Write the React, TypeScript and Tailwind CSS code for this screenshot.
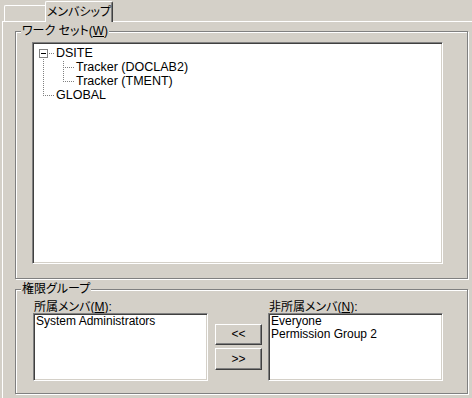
import React from 'react'

const dotsH = (x1: number, x2: number, y: number) => {
  const r = []
  for (let x = x1; x <= x2; x += 2) r.push(<rect key={`h${x}-${y}`} x={x} y={y} width={1} height={1} fill="#808080" />)
  return r
}

const dotsV = (x: number, y1: number, y2: number) => {
  const r = []
  for (let y = y1; y <= y2; y += 2) r.push(<rect key={`v${x}-${y}`} x={x} y={y} width={1} height={1} fill="#808080" />)
  return r
}

function TreeRow({ kind, label }: { kind: 'root' | 'child' | 'lastChild' | 'last'; label: string }) {
  const w = kind === 'child' || kind === 'lastChild' ? 42 : 22
  return (
    <div className="flex h-[14px] items-center">
      <svg width={w} height={14} className="shrink-0" shapeRendering="crispEdges">
        {kind === 'root' && (
          <>
            <rect x={6.5} y={3.5} width={8} height={8} fill="#fff" stroke="#808080" />
            <rect x={8} y={7} width={5} height={1} fill="#000" />
            {dotsH(16, 21, 7)}
            {dotsV(10, 13, 13)}
          </>
        )}
        {kind === 'child' && (
          <>
            {dotsV(10, 1, 13)}
            {dotsV(30, 1, 13)}
            {dotsH(32, 40, 7)}
          </>
        )}
        {kind === 'lastChild' && (
          <>
            {dotsV(10, 1, 13)}
            {dotsV(30, 1, 7)}
            {dotsH(32, 40, 7)}
          </>
        )}
        {kind === 'last' && (
          <>
            {dotsV(10, 1, 7)}
            {dotsH(12, 21, 7)}
          </>
        )}
      </svg>
      <span className="ml-[1px] whitespace-nowrap">{label}</span>
    </div>
  )
}

function GroupBox({ title, className, children }: { title: React.ReactNode; className: string; children: React.ReactNode }) {
  return (
    <div className={`relative border border-[#808080] shadow-[1px_1px_0_#fff,inset_1px_1px_0_#fff] ${className}`}>
      <span className="absolute -top-[8px] left-[5px] bg-[#d4d0c8] px-[1px] leading-[15px] [font-feature-settings:'palt']">{title}</span>
      {children}
    </div>
  )
}

const sunken =
  'border border-t-[#808080] border-l-[#808080] border-r-white border-b-white bg-white shadow-[inset_1px_1px_0_#404040,inset_-1px_-1px_0_#d4d0c8]'

const raised =
  'flex items-center justify-center border border-t-white border-l-white border-r-[#404040] border-b-[#404040] bg-[#d4d0c8] shadow-[inset_-1px_-1px_0_#808080]'

export default function App() {
  return (
    <div className="h-[398px] w-[472px] overflow-hidden bg-[#d4d0c8] font-['Liberation_Sans','Noto_Sans_CJK_JP',sans-serif] text-[12px] leading-[13px] text-black">
      {/* tabs */}
      <div className="flex h-[21px] items-end pl-[4px]">
        <div className="h-[16px] w-[43px] rounded-tl-[2px] border-l border-t border-white" />
        <div className="relative z-10 -mb-[1px] -ml-[2px] flex h-[21px] w-[68px] items-center justify-center rounded-t-[2px] border-l border-r border-t border-l-white border-r-[#404040] border-t-white bg-[#d4d0c8] pt-[1px] shadow-[inset_-1px_0_0_#808080] [font-feature-settings:'palt']">
          メンバシップ
        </div>
      </div>

      {/* tab page */}
      <div className="ml-[2px] h-[400px] border-l border-t border-white pl-[12px] pt-[9px]">
        <GroupBox
          title={
            <>
              ワーク セット(<span className="underline">W</span>)
            </>
          }
          className="h-[248px] w-[453px] pl-[16px] pt-[10px]"
        >
          <div className={`h-[222px] w-[411px] pt-[3px] text-[12.5px] ${sunken}`}>
            <TreeRow kind="root" label="DSITE" />
            <TreeRow kind="child" label="Tracker (DOCLAB2)" />
            <TreeRow kind="lastChild" label="Tracker (TMENT)" />
            <TreeRow kind="last" label="GLOBAL" />
          </div>
        </GroupBox>

        <GroupBox title="権限グループ" className="mt-[10px] h-[105px] w-[453px] pl-[17px] pt-[9px]">
          <div className="flex">
            <div className="flex flex-col">
              <div className="ml-[1px] h-[14px] leading-[16px] [font-feature-settings:'palt']">
                所属メンバ(<span className="underline">M</span>):
              </div>
              <div className={`h-[68px] w-[175px] pl-[2px] pt-[1px] ${sunken}`}>System Administrators</div>
            </div>

            <div className="ml-[7px] mt-[25px] flex flex-col gap-[3px]">
              <div className={`h-[21px] w-[47px] ${raised}`}>&lt;&lt;</div>
              <div className={`h-[22px] w-[47px] ${raised}`}>&gt;&gt;</div>
            </div>

            <div className="ml-[6px] flex flex-col">
              <div className="ml-[1px] h-[14px] leading-[16px] [font-feature-settings:'palt']">
                非所属メンバ(<span className="underline">N</span>):
              </div>
              <div className={`h-[68px] w-[175px] pl-[2px] pt-[1px] leading-[12.5px] ${sunken}`}>
                <div>Everyone</div>
                <div>Permission Group 2</div>
              </div>
            </div>
          </div>
        </GroupBox>
      </div>
    </div>
  )
}
